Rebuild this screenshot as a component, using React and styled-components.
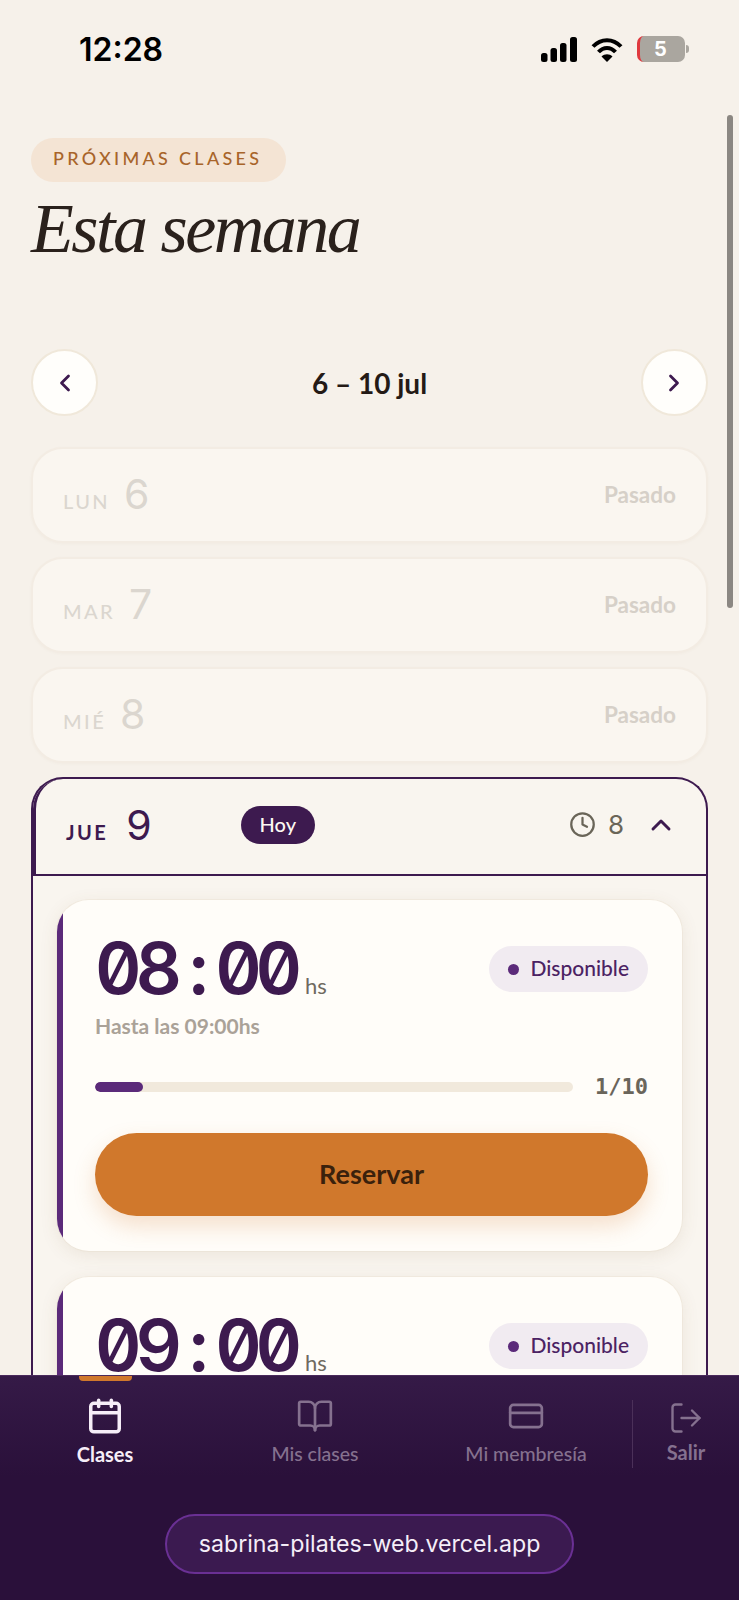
import React from 'react';
import styled, { createGlobalStyle } from 'styled-components';
import { BookOpen, Calendar, ChevronLeft, ChevronRight, ChevronUp, Clock, CreditCard, LogOut } from 'lucide-react';

const GlobalStyle = createGlobalStyle`
  html, body { margin: 0; padding: 0; background: #f6f1ea; }
  * { box-sizing: border-box; }
`;

const SANS = `"Lato", "Liberation Sans", sans-serif`;
const PLUM = '#3d1a4f';
const MONO = `"Inter", "DejaVu Sans Mono", monospace`;

const Page = styled.div`
  position: relative;
  width: 739px;
  height: 1600px;
  display: flex;
  flex-direction: column;
  overflow: hidden;
  background: #f6f1ea;
  font-family: ${SANS};
`;

const StatusBar = styled.div`
  flex: 0 0 100px;
  display: flex;
  justify-content: space-between;
  align-items: flex-start;
  padding: 36px 54px 0 79px;
`;

const Time = styled.div`
  font-family: "Inter", sans-serif;
  font-size: 32px;
  line-height: 27px;
  font-weight: 600;
  color: #000;
`;

const StatusIcons = styled.div`
  display: flex;
  align-items: center;
  gap: 14px;
`;

const Battery = styled.div`
  position: relative;
  width: 48px;
  height: 26px;
  padding-right: 4px;
  border-radius: 7px;
  border-left: 3px solid #e0393e;
  background: #aaa69f;
  color: #fff;
  font-family: "Inter", sans-serif;
  font-size: 20px;
  font-weight: 700;
  line-height: 26px;
  text-align: center;
  &::after {
    content: '';
    position: absolute;
    right: -4px;
    top: 9px;
    width: 3px;
    height: 8px;
    border-radius: 0 3px 3px 0;
    background: #aaa69f;
  }
`;

const Scroll = styled.main`
  flex: 1;
  min-height: 0;
  overflow: hidden;
  padding: 38px 31px 0;
`;

const Scrollbar = styled.div`
  position: absolute;
  left: 727px;
  top: 115px;
  width: 6px;
  height: 493px;
  border-radius: 3px;
  background: #8b8782;
`;

const Eyebrow = styled.div`
  display: inline-block;
  height: 44px;
  width: 255px;
  padding-left: 22px;
  border-radius: 22px;
  background: #f4e4d4;
  color: #a8642a;
  font-size: 18px;
  font-weight: 500;
  letter-spacing: 3.3px;
  line-height: 41px;
  white-space: nowrap;
`;

const Title = styled.h1`
  margin: 11px 0 0;
  font-family: "Liberation Serif", serif;
  font-style: italic;
  font-weight: 400;
  font-size: 70px;
  line-height: 72px;
  letter-spacing: -2.5px;
  color: #2a211c;
`;

const WeekNav = styled.div`
  display: flex;
  justify-content: space-between;
  align-items: center;
  margin-top: 84px;
`;

const RoundButton = styled.button`
  width: 67px;
  height: 67px;
  padding: 0;
  display: flex;
  align-items: center;
  justify-content: center;
  border-radius: 50%;
  border: 2px solid #f0e8da;
  background: #fffefb;
  color: ${PLUM};
`;

const WeekLabel = styled.div`
  font-size: 28px;
  font-weight: 700;
  color: #241a16;
`;

const Days = styled.div`
  display: flex;
  flex-direction: column;
  gap: 14px;
  margin-top: 31px;
`;

const PastRow = styled.div`
  height: 96px;
  display: flex;
  align-items: center;
  justify-content: space-between;
  padding: 0 30px 2px;
  border-radius: 32px;
  border: 2px solid #f3ece3;
  background: #faf6f0;
  box-shadow: 0 1px 3px rgba(120, 90, 50, 0.04);
`;

const DayHead = styled.div`
  display: flex;
  align-items: baseline;
  gap: ${p => (p.$today ? 18 : 14)}px;
  color: ${p => (p.$today ? PLUM : '#dbd6cf')};
`;

const DayName = styled.span`
  font-size: 20px;
  font-weight: ${p => (p.$today ? 700 : 500)};
  letter-spacing: 2.4px;
`;

const DayNum = styled.span`
  font-family: "Inter", sans-serif;
  font-size: 41px;
  line-height: 42px;
  font-weight: 400;
`;

const PastLabel = styled.span`
  font-size: 22.5px;
  font-weight: 700;
  color: #d6d0c8;
`;

const TodayCard = styled.section`
  border: 2px solid ${PLUM};
  border-bottom: 0;
  border-radius: 32px 32px 0 0;
  background: #f9f5ef;
`;

const TodayHeader = styled.header`
  height: 97px;
  display: flex;
  align-items: center;
  padding: 0 29px 4px 30px;
  border-left: 3px solid ${PLUM};
  border-radius: 30px 0 0 0;
  border-bottom: 2px solid ${PLUM};
`;

const TodayPill = styled.span`
  margin-left: 89px;
  height: 38px;
  padding: 0 19px;
  border-radius: 19px;
  background: ${PLUM};
  color: #fdf8f2;
  font-size: 20px;
  font-weight: 500;
  line-height: 36px;
`;

const ClassCount = styled.div`
  margin-left: auto;
  display: flex;
  align-items: center;
  gap: 12px;
  color: #6a6558;
  font-family: "Inter", sans-serif;
  font-size: 26px;
  font-weight: 400;
`;

const ChevronSlot = styled.span`
  display: flex;
  margin-left: 21px;
  color: ${PLUM};
`;

const TodayBody = styled.div`
  display: flex;
  flex-direction: column;
  gap: 26px;
  padding: 24px 24px 0;
`;

const ClassCard = styled.article`
  position: relative;
  height: 351px;
  padding: 41px 34px 0 38px;
  overflow: hidden;
  border-radius: 32px;
  background: #fffdf9;
  box-shadow: 0 4px 18px rgba(120, 90, 50, 0.1), 0 0 0 1px #f5efe5;
  &::before {
    content: '';
    position: absolute;
    left: 0;
    top: 0;
    bottom: 0;
    width: 6px;
    background: #5b2a7a;
  }
`;

const TimeRow = styled.div`
  display: flex;
  justify-content: space-between;
  align-items: flex-start;
`;

const Clock24 = styled.div`
  display: flex;
  align-items: baseline;
`;

const BigTime = styled.span`
  font-family: ${MONO};
  font-variant-numeric: slashed-zero tabular-nums;
  font-size: 72px;
  line-height: 54px;
  font-weight: 600;
  letter-spacing: -6.2px;
  color: ${PLUM};
`;

const Hs = styled.span`
  margin-left: 9px;
  font-size: 22px;
  color: #6f6a5f;
`;

const Until = styled.div`
  margin-top: 14px;
  font-size: 21px;
  font-weight: 700;
  color: #aaa298;
`;

const StatusPill = styled.div`
  display: flex;
  align-items: center;
  gap: 11px;
  height: 46px;
  margin-top: 5px;
  padding: 0 19px 3px;
  border-radius: 23px;
  background: #f1ebf1;
  color: #4b2263;
  font-size: 21px;
  font-weight: 500;
  &::before {
    content: '';
    width: 11px;
    height: 11px;
    margin-top: 3px;
    border-radius: 50%;
    background: #5b2a7a;
  }
`;

const CapacityRow = styled.div`
  display: flex;
  align-items: center;
  justify-content: space-between;
  margin-top: 36px;
`;

const Track = styled.div`
  width: 478px;
  height: 10px;
  border-radius: 5px;
  background: #f1e9dc;
  overflow: hidden;
`;

const Fill = styled.div`
  height: 100%;
  border-radius: 5px;
  background: #5b2a7a;
`;

const Spots = styled.span`
  font-family: "DejaVu Sans Mono", monospace;
  font-size: 22px;
  font-weight: 700;
  color: #6a655b;
`;

const ReserveButton = styled.button`
  display: block;
  width: 100%;
  height: 83px;
  margin-top: 34px;
  padding-bottom: 3px;
  border: 0;
  border-radius: 42px;
  background: #d0782c;
  color: #3a210c;
  font-family: ${SANS};
  font-size: 27px;
  font-weight: 700;
  box-shadow: 0 10px 22px rgba(208, 120, 44, 0.22);
`;

const BottomBar = styled.footer`
  position: relative;
  flex: 0 0 225px;
  padding-top: 21px;
  background: linear-gradient(#351a47, #2a103a 45%);
  border-top: 1px solid #4a2a5c;
`;

const Tabs = styled.nav`
  display: flex;
  align-items: flex-start;
`;

const Tab = styled.div`
  position: relative;
  width: ${p => p.$w}px;
  display: flex;
  flex-direction: column;
  align-items: center;
  gap: 7px;
  color: ${p => (p.$active ? '#f6eef8' : '#85718f')};
  font-size: ${p => (p.$active ? 20 : 19.5)}px;
  font-weight: ${p => (p.$active ? 700 : 500)};
`;

const Indicator = styled.span`
  position: absolute;
  left: 79px;
  top: 0;
  width: 53px;
  height: 5px;
  border-radius: 0 0 4px 4px;
  background: #d0782c;
`;

const SignOut = styled.div`
  width: 107px;
  height: 68px;
  margin-top: 3px;
  display: flex;
  flex-direction: column;
  align-items: center;
  gap: 4px;
  border-left: 1px solid #4b3059;
  color: #85718f;
  font-size: 20px;
  font-weight: 700;
`;

const UrlRow = styled.div`
  display: flex;
  justify-content: center;
  margin-top: 46px;
`;

const UrlPill = styled.div`
  width: 409px;
  height: 60px;
  border-radius: 30px;
  border: 2px solid #6a3094;
  background: #3b1a50;
  color: #f5eef8;
  font-family: "Inter", sans-serif;
  font-size: 23.2px;
  line-height: 56px;
  text-align: center;
`;

const SignalIcon = () => (
  <svg width="36" height="25" viewBox="0 0 36 25" fill="#000">
    <rect x="0" y="16" width="6.5" height="9" rx="2.5" />
    <rect x="9.5" y="11" width="6.5" height="14" rx="2.5" />
    <rect x="19" y="6" width="6.5" height="19" rx="2.5" />
    <rect x="29" y="0" width="7" height="25" rx="2.5" />
  </svg>
);

const WifiIcon = () => (
  <svg width="32" height="25" viewBox="0 0 32 25" fill="none" stroke="#000" strokeWidth="4">
    <path d="M2 9.5C10 1 22 1 30 9.5" />
    <path d="M7.5 15C12.5 9.5 19.5 9.5 24.5 15" />
    <path d="M16 25L10.5 19.5C13.5 16.5 18.5 16.5 21.5 19.5Z" fill="#000" stroke="none" />
  </svg>
);

const pastDays = [
  ['LUN', 6],
  ['MAR', 7],
  ['MIÉ', 8],
];

const sessions = [
  { start: '08:00', end: '09:00', booked: 1, total: 10 },
  { start: '09:00', end: '10:00', booked: 1, total: 10 },
];

const SessionCard = ({ session }) => (
  <ClassCard>
    <TimeRow>
      <div>
        <Clock24>
          <BigTime>{session.start.replace(':', ' : ')}</BigTime>
          <Hs>hs</Hs>
        </Clock24>
        <Until>Hasta las {session.end}hs</Until>
      </div>
      <StatusPill>Disponible</StatusPill>
    </TimeRow>
    <CapacityRow>
      <Track>
        <Fill style={{ width: `${(session.booked / session.total) * 100}%` }} />
      </Track>
      <Spots>{session.booked}/{session.total}</Spots>
    </CapacityRow>
    <ReserveButton>Reservar</ReserveButton>
  </ClassCard>
);

export default function App() {
  return (
    <Page>
      <GlobalStyle />
      <StatusBar>
        <Time>12:28</Time>
        <StatusIcons>
          <SignalIcon />
          <WifiIcon />
          <Battery>5</Battery>
        </StatusIcons>
      </StatusBar>
      <Scroll>
        <Eyebrow>PRÓXIMAS CLASES</Eyebrow>
        <Title>Esta semana</Title>
        <WeekNav>
          <RoundButton><ChevronLeft size={28} strokeWidth={2.4} /></RoundButton>
          <WeekLabel>6 – 10 jul</WeekLabel>
          <RoundButton><ChevronRight size={28} strokeWidth={2.4} /></RoundButton>
        </WeekNav>
        <Days>
          {pastDays.map(([name, num]) => (
            <PastRow key={name}>
              <DayHead>
                <DayName>{name}</DayName>
                <DayNum>{num}</DayNum>
              </DayHead>
              <PastLabel>Pasado</PastLabel>
            </PastRow>
          ))}
          <TodayCard>
            <TodayHeader>
              <DayHead $today>
                <DayName $today>JUE</DayName>
                <DayNum>9</DayNum>
              </DayHead>
              <TodayPill>Hoy</TodayPill>
              <ClassCount>
                <Clock size={27} strokeWidth={2} />
                8
              </ClassCount>
              <ChevronSlot><ChevronUp size={32} strokeWidth={2.2} /></ChevronSlot>
            </TodayHeader>
            <TodayBody>
              {sessions.map(s => <SessionCard key={s.start} session={s} />)}
            </TodayBody>
          </TodayCard>
        </Days>
      </Scroll>
      <BottomBar>
        <Indicator />
        <Tabs>
          <Tab $w={210} $active>
            <Calendar size={38} strokeWidth={2.2} />
            Clases
          </Tab>
          <Tab $w={210}>
            <BookOpen size={38} strokeWidth={1.7} />
            Mis clases
          </Tab>
          <Tab $w={212}>
            <CreditCard size={38} strokeWidth={1.7} />
            Mi membresía
          </Tab>
          <SignOut>
            <LogOut size={36} strokeWidth={1.6} />
            Salir
          </SignOut>
        </Tabs>
        <UrlRow>
          <UrlPill>sabrina-pilates-web.vercel.app</UrlPill>
        </UrlRow>
      </BottomBar>
      <Scrollbar />
    </Page>
  );
}
